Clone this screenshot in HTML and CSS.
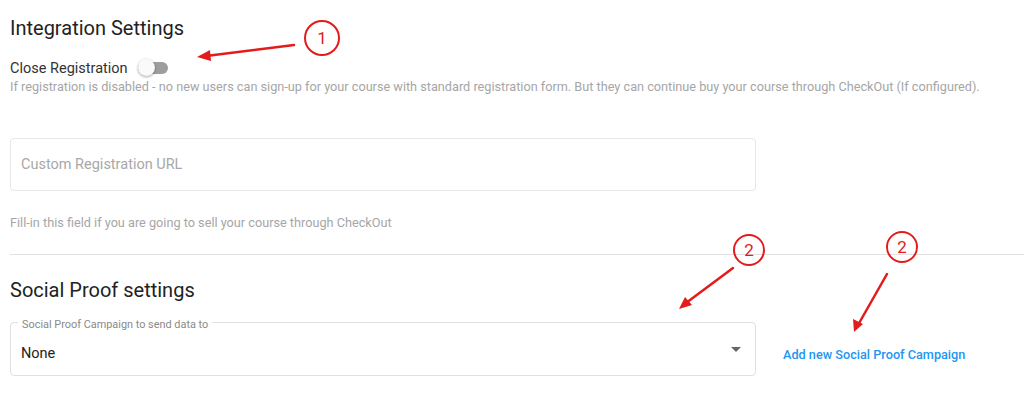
FILE: index.html
```html
<!DOCTYPE html>
<html lang="en">
<head>
  <meta charset="UTF-8">
  <title>Integration Settings</title>
  <link rel="stylesheet" href="styles.css">
</head>
<body>

  <div class="settings">
    <h2 class="section-title">Integration Settings</h2>

    <div class="switch-row">
      <span class="switch-label">Close Registration</span>
      <span class="switch"><span class="switch-thumb"></span></span>
    </div>
    <p class="hint hint-top">If registration is disabled - no new users can sign-up for your course with standard registration form. But they can continue buy your course through CheckOut (If configured).</p>

    <div class="field">
      <input class="text-input" type="text" placeholder="Custom Registration URL">
    </div>
    <p class="hint hint-field">Fill-in this field if you are going to sell your course through CheckOut</p>

    <hr class="divider">

    <h2 class="section-title section-title-second">Social Proof settings</h2>

    <div class="select-row">
      <div class="select-box">
        <span class="select-label">Social Proof Campaign to send data to</span>
        <span class="select-value">None</span>
        <span class="select-arrow"></span>
      </div>
      <a class="add-link" href="#">Add new Social Proof Campaign</a>
    </div>
  </div>

  <!-- red annotation marks drawn over the screenshot -->
  <svg class="marks" width="1024" height="416" viewBox="0 0 1024 416">
    <g fill="none" stroke="#e31b1b" stroke-width="2">
      <circle cx="322" cy="38" r="17"/>
      <circle cx="749" cy="250" r="15"/>
      <circle cx="902" cy="247" r="15"/>
    </g>
    <g stroke="#e31b1b" stroke-width="2.5" stroke-linecap="round">
      <line x1="294" y1="45" x2="206" y2="56"/>
      <line x1="733" y1="268" x2="686" y2="303"/>
      <line x1="887" y1="274" x2="858" y2="325"/>
    </g>
    <g fill="#e31b1b">
      <polygon points="197,57 210,50 211,61"/>
      <polygon points="679,309 685,297 692,305"/>
      <polygon points="854,332 853,319 863,324"/>
    </g>
    <g fill="#e31b1b" font-family="Roboto, sans-serif" font-size="17" text-anchor="middle">
      <text x="322" y="44">1</text>
      <text x="749" y="256">2</text>
      <text x="902" y="253">2</text>
    </g>
  </svg>

</body>
</html>
```

FILE: styles.css
```css
body { margin: 0; background: #fff; font-family: Roboto, "Liberation Sans", sans-serif; color: #333; }
.settings { padding: 14px 0 0 10px; }
.section-title { margin: 0; font-size: 20px; font-weight: 400; color: #222; line-height: 28px; }
.section-title-second { margin-top: 21px; }
.switch-row { display: flex; align-items: center; gap: 10px; margin-top: 16px; height: 20px; }
.switch-label { font-size: 14.5px; color: #333; }
.switch { position: relative; width: 30px; height: 12px; border-radius: 6px; background: #9e9e9e; }
.switch-thumb { position: absolute; left: 0; top: -3px; width: 17px; height: 17px; border-radius: 50%; background: #fafafa; box-shadow: 0 1px 3px rgba(0,0,0,0.35); }
.hint { margin: 0; font-size: 12.7px; color: #a6a6a6; line-height: 16px; }
.hint-top { margin-top: 1px; }
.field { width: 746px; margin-top: 43px; }
.text-input { display: block; width: 100%; height: 53px; box-sizing: border-box; border: 1px solid #e6e6e6; border-radius: 4px; padding: 0 10px; font-family: inherit; font-size: 14.5px; color: #333; outline: none; }
.text-input::placeholder { color: #a8a8a8; }
.hint-field { margin-top: 24px; }
.divider { margin: 23px 0 0; border: 0; border-top: 1px solid #e0e0e0; }
.select-row { display: flex; align-items: center; gap: 27px; margin-top: 18px; }
.select-box { position: relative; width: 746px; height: 54px; box-sizing: border-box; padding: 8px 10px 0; border: 1px solid #e0e0e0; border-radius: 4px; display: flex; align-items: center; }
.select-label { position: absolute; left: 7px; top: -4px; padding: 0 4px; background: #fff; font-size: 10.9px; line-height: 12px; color: #8a8a8a; }
.select-value { font-size: 14.5px; color: #222; }
.select-arrow { position: absolute; right: 14px; top: 24px; width: 0; height: 0; border-left: 5px solid transparent; border-right: 5px solid transparent; border-top: 5px solid #666; }
.add-link { font-size: 12.7px; font-weight: 500; color: #2196f3; text-decoration: none; padding-top: 10px; }
.marks { position: absolute; left: 0; top: 0; pointer-events: none; }
```
